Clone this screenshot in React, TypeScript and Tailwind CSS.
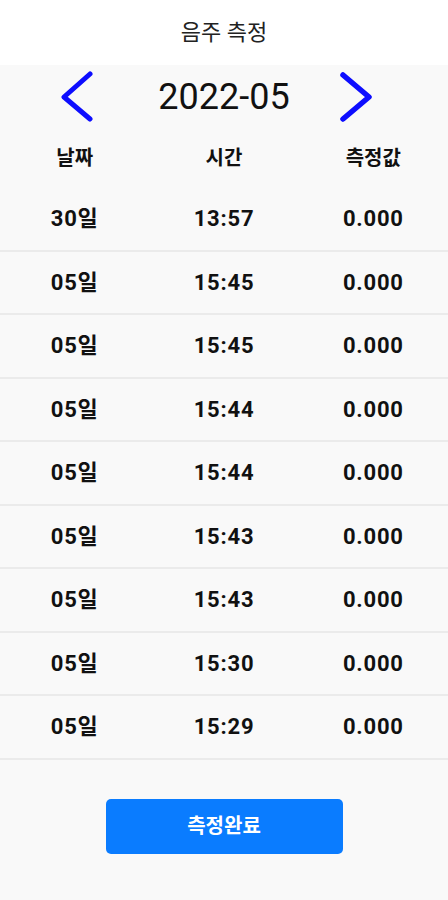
import React from "react";

const rows = [
  ["30일", "13:57", "0.000"],
  ["05일", "15:45", "0.000"],
  ["05일", "15:45", "0.000"],
  ["05일", "15:44", "0.000"],
  ["05일", "15:44", "0.000"],
  ["05일", "15:43", "0.000"],
  ["05일", "15:43", "0.000"],
  ["05일", "15:30", "0.000"],
  ["05일", "15:29", "0.000"],
];

export default function App() {
  return (
    <div
      className="w-full min-h-screen bg-[#f9f9f9] text-[#111]"
      style={{ fontFamily: "Roboto, 'Noto Sans CJK KR', sans-serif" }}
    >
      <div className="h-[65px] bg-white flex items-center justify-center text-[22px] text-[#222]">
        음주 측정
      </div>
      <div className="h-[63px] grid grid-cols-3 items-center">
        <div className="flex">
          <svg width="36" height="52" viewBox="0 0 36 52" className="ml-[60px]">
            <polyline
              points="30,3 4,26 30,48"
              fill="none"
              stroke="#0d0dff"
              strokeWidth="5"
              strokeLinecap="round"
              strokeLinejoin="round"
            />
          </svg>
        </div>
        <div className="text-center text-[36px] leading-none text-[#111] whitespace-nowrap">2022-05</div>
        <div className="flex">
          <svg width="36" height="52" viewBox="0 0 36 52" className="ml-[38px]">
            <polyline
              points="6,4 32,26 6,48"
              fill="none"
              stroke="#0d0dff"
              strokeWidth="5.5"
              strokeLinecap="round"
              strokeLinejoin="round"
            />
          </svg>
        </div>
      </div>
      <div className="h-[60px] grid grid-cols-3 items-center text-center text-[20px] font-bold">
        <div>날짜</div>
        <div>시간</div>
        <div>측정값</div>
      </div>
      {rows.map((r, i) => (
        <div
          key={i}
          className="h-[63.5px] grid grid-cols-3 items-center text-center text-[22px] font-bold tracking-[0.8px] border-b-2 border-[#ebebeb]"
        >
          <div>{r[0]}</div>
          <div>{r[1]}</div>
          <div>{r[2]}</div>
        </div>
      ))}
      <div className="flex justify-center pt-[39px]">
        <button className="w-[237px] h-[55px] rounded-[5px] bg-[#0a7cff] text-white font-bold text-[20px]">
          측정완료
        </button>
      </div>
    </div>
  );
}
